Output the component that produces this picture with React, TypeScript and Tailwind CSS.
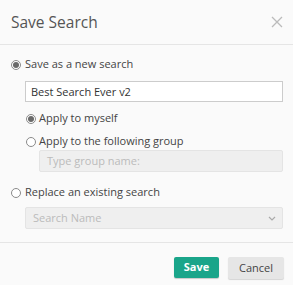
import React from "react";

function Radio({ checked }: { checked?: boolean }) {
	return (
		<span className="flex h-[10px] w-[10px] shrink-0 items-center justify-center rounded-full border border-[#8a8a8a] bg-white">
			{checked && <span className="h-[6px] w-[6px] rounded-full bg-[#6a6a6a]" />}
		</span>
	);
}

export default function App() {
	return (
		<div
			className="h-[285px] w-[293px] bg-[#fafafa] text-[11px] text-[#444]"
			style={{ fontFamily: '"Open Sans", sans-serif' }}
		>
			{/* Header */}
			<div className="flex h-[45px] items-center justify-between border-b border-[#e5e5e5] pl-[11px] pr-[6px]">
				<h1 className="pt-[1px] text-[15.5px] text-[#555]">Save Search</h1>
				<button className="flex h-[20px] w-[20px] items-center justify-center text-[#bbb]">
					<svg width="12" height="12" viewBox="0 0 12 12" fill="none" stroke="currentColor" strokeWidth="1.3">
						<path d="M1 1l10 10M11 1L1 11" />
					</svg>
				</button>
			</div>

			{/* Body */}
			<div className="flex flex-col pl-[11px] pr-[10px] pt-[11px]">
				<label className="flex h-[17px] items-center gap-[4px]">
					<Radio checked />
					<span>Save as a new search</span>
				</label>

				<div className="mt-[8px] pl-[14px]">
					<input
						readOnly
						value="Best Search Ever v2"
						className="block h-[21px] w-full border border-[#ccc] bg-white px-[5px] text-[11px] text-[#333] outline-none"
					/>
				</div>

				<div className="flex flex-col pl-[15px]">
					<label className="mt-[8px] flex h-[17px] items-center gap-[3px]">
						<Radio checked />
						<span>Apply to myself</span>
					</label>
					<label className="mt-[6px] flex h-[17px] items-center gap-[3px]">
						<Radio />
						<span>Apply to the following group</span>
					</label>
					<div className="pl-[13px]">
						<div className="flex h-[22px] items-center rounded-[2px] border border-[#e4e4e4] bg-[#efefef] px-[7px] text-[#bbb]">
							Type group name:
						</div>
					</div>
				</div>

				<label className="mt-[12px] flex h-[17px] items-center gap-[4px]">
					<Radio />
					<span>Replace an existing search</span>
				</label>

				<div className="mt-[6px] pl-[14px]">
					<div className="flex h-[22px] items-center justify-between rounded-[2px] border border-[#e4e4e4] bg-[#efefef] pl-[7px] pr-[6px] text-[#bbb]">
						<span>Search Name</span>
						<svg width="8" height="5" viewBox="0 0 8 5" fill="none" stroke="#aaa" strokeWidth="1.2">
							<path d="M1 1l3 3 3-3" />
						</svg>
					</div>
				</div>
			</div>

			{/* Footer */}
			<div className="mt-[13px] flex justify-end gap-[9px] border-t border-[#e5e5e5] pr-[9px] pt-[14px]">
				<button className="h-[21px] w-[45px] rounded-[2px] bg-[#1aa58a] text-[11px] font-bold text-white shadow-[0_1px_1px_rgba(0,0,0,0.2)]">
					Save
				</button>
				<button className="h-[22px] w-[56px] rounded-[2px] bg-[#e6e6e6] text-[11px] text-[#444] shadow-[0_1px_1px_rgba(0,0,0,0.15)]">
					Cancel
				</button>
			</div>
		</div>
	);
}
